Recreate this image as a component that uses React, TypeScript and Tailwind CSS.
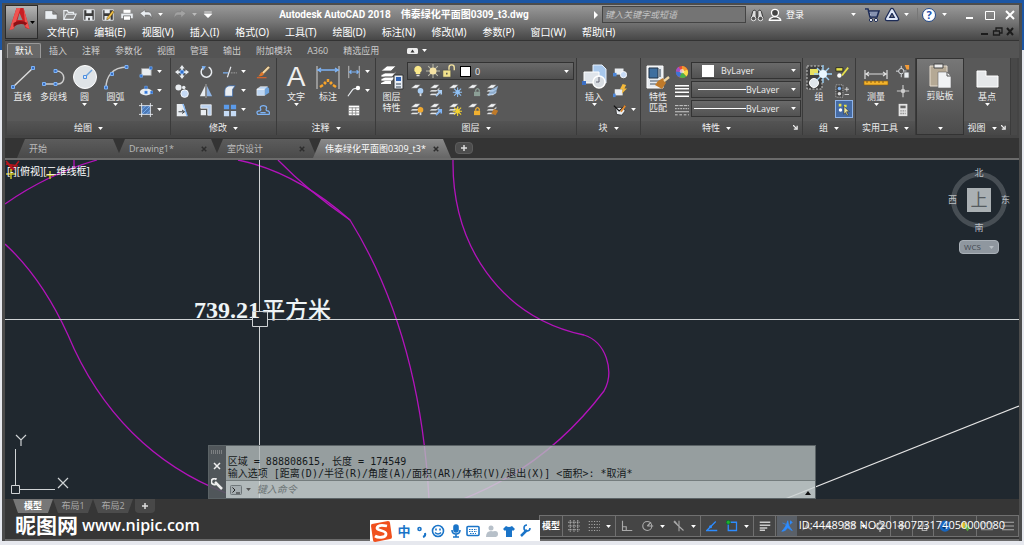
import { useState } from 'react'
import type { ReactNode } from 'react'

const menus = ['文件(F)', '编辑(E)', '视图(V)', '插入(I)', '格式(O)', '工具(T)', '绘图(D)', '标注(N)', '修改(M)', '参数(P)', '窗口(W)', '帮助(H)']
const ribbonTabs = ['默认', '插入', '注释', '参数化', '视图', '管理', '输出', '附加模块', 'A360', '精选应用']

const L = '#e9edf1'
const B = '#7db3f5'
const D = '#2c3138'

// 16px ribbon, toolbar and status icons
const small: Record<string, ReactNode> = {
  // quick access
  new: <path d="M1 3h9l5 4v6H1z M10 3v4h5" fill={L} stroke="#666" strokeWidth=".8" />,
  open: <><path d="M1 13V3h4l1 2h6v2" fill="none" stroke={L} strokeWidth="1.400" /><path d="M1 13l3-6h11l-3 6z" fill="#888" stroke={L} strokeWidth="1.200" /></>,
  save: <><path d="M2 2h12v12H2z" fill="#3a3a3a" stroke={L} /><path d="M5 2h6v4H5zM4 9h8v5H4z" fill={L} /><path d="M7 11h2v3H7z" fill="#444" /></>,
  saveAs: <><path d="M2 2h12v12H2z" fill="#3a3a3a" stroke={L} /><path d="M4 2h6v4H4zM4 9h7v5H4z" fill={L} /><path d="M7 11l6-8 2 1.500-6 8-2.500 1z" fill="#f3c348" stroke="#5a4010" strokeWidth=".6" /></>,
  print: <><path d="M4 2h8v4H4z" fill="#fff" /><path d="M1 6h14v6H1z" fill={L} stroke="#777" strokeWidth=".6" /><path d="M4 9h8v5H4z" fill="#fff" stroke="#555" strokeWidth=".8" /></>,
  undo: <path d="M1 6l6-4v2.500h3c3 0 5 2 4.500 7.500-1-3-2-4-4.500-4H7V11z" fill={L} stroke="#555" strokeWidth=".5" />,
  redo: <path d="M15 6L9 2v2.500H6C3 4.500 1 6.500 1.500 12c1-3 2-4 4.500-4h3V11z" fill="#a2a2a2" stroke="#777" strokeWidth=".5" />,
  custom: <path d="M3 4h10M3 6.500h10l-5 5z" fill="#fff" stroke="#fff" />,
  // info center
  search: <><path d="M3 4c1-2 3-2 4 0v8H1zM9 4c1-2 3-2 4 0l2 8H9z" fill="#ddd" stroke="#222" /><circle cx="4" cy="12" r="2.600" fill="#555" stroke="#eee" /><circle cx="12" cy="12" r="2.600" fill="#555" stroke="#eee" /></>,
  user: <><circle cx="8" cy="5.500" r="4" fill="#444" stroke="#fff" strokeWidth="1.500" /><path d="M1.500 14c0-3 3-3 5-4h3c2 1 5 1 5 4z" fill="#444" stroke="#fff" strokeWidth="1.500" /></>,
  cart: <><path d="M1 2h3l2 8h7l2-6H5" fill="#cdd8ec" stroke="#1c2b56" strokeWidth="1.600" /><path d="M6 6h8M7 8h6" stroke="#1c2b56" strokeWidth=".8" /><circle cx="7" cy="13" r="1.600" fill="#fff" stroke="#1c2b56" /><circle cx="12" cy="13" r="1.600" fill="#fff" stroke="#1c2b56" /></>,
  exchange: <><path d="M8 3l5 9H3z" fill="none" stroke="#1c2b56" strokeWidth="4.500" strokeLinejoin="round" /><path d="M8 3l5 9H3z" fill="none" stroke="#dfe8f8" strokeWidth="2" strokeLinejoin="round" /></>,
  // draw
  rect: <><path d="M3 4h11v8H3z" fill={L} stroke="#999" /><path d="M12 2h3v3h-3zM1 11h3v3H1z" fill="#2f6fd0" stroke={B} strokeWidth=".7" /></>,
  ellipse: <><ellipse cx="8" cy="9" rx="7" ry="4" fill={L} /><path d="M6.500 2.500h3v3h-3zM6.500 8h3v3h-3zM13 8h3v3h-3z" fill="#2f6fd0" stroke={B} strokeWidth=".6" /></>,
  hatch: <><path d="M3 3h10v10H3z" fill="#4b78b5" /><path d="M3 13L13 3M3 8l5-5M8 13l5-5" stroke={B} /><path d="M0 3h16M0 13h16M3 0v16M13 0v16" stroke={L} /></>,
  // modify
  move: <><path d="M8 0l3 4H9v3h3V5l4 3-4 3V9H9v3h2l-3 4-3-4h2V9H4v2L0 8l4-3v2h3V4H5z" fill={L} /><path d="M6 6h4v4H6z" fill="#2f6fd0" stroke={B} strokeWidth=".8" /></>,
  rotate: <><path d="M11 2.500A6 6 0 1 1 5 3" fill="none" stroke={L} strokeWidth="1.700" /><path d="M3 1l5 .5L5 6z" fill={B} /></>,
  trim: <><path d="M0 9h6" stroke={B} strokeWidth="1.400" /><path d="M9 9h7" stroke="#aaa" strokeDasharray="2 1" /><path d="M9 2L5 14" stroke={L} strokeWidth="1.300" /></>,
  brush: <><path d="M14 1l2 2-8 8-2-2z" fill="#f2d9a8" stroke="#5c3a12" strokeWidth=".5" /><path d="M7 8l2 2c-1 3-4 3-7 3 3-1 2-4 5-5z" fill="#e0782a" /><path d="M1 14.500h11" stroke="#d8632a" strokeWidth="1.400" /></>,
  copy: <><circle cx="4" cy="4" r="3.500" fill={L} /><circle cx="11" cy="11" r="4.300" fill="#c6daf5" stroke="#fff" /><circle cx="10" cy="4" r="2" fill={L} /></>,
  mirror: <><path d="M7 2v12H1z" fill={L} /><path d="M9 2v12h6z" fill="#8fb4e4" /><path d="M8 0v16" stroke="#ddd" strokeWidth=".7" /></>,
  fillet: <path d="M2 14V8c0-4 3-6 6-6h6l-3 4v8z" fill={L} stroke="#2a5fa8" strokeWidth=".8" />,
  box: <><path d="M1 6l4-3h8l-3 3zM1 6h9v7H1z" fill="#bcd5f2" stroke="#fff" strokeWidth=".6" /><path d="M10 6l3-3 2 2v5l-5 3z" fill="#6fa4dd" /></>,
  stretch: <><path d="M2 1h8l4 14H2z" fill={L} /><path d="M9 1l5 14" stroke={B} strokeWidth="1.500" /><path d="M4 10h6M8 8l3 2-3 2" stroke={D} fill="none" /></>,
  scale: <><path d="M2 2h12v12h-4V6H2z" fill="#b9d0ee" stroke="#fff" strokeWidth=".8" /><path d="M2 8h6v6H2z" fill={L} /></>,
  array: <><path d="M1 2h6v5H1zM9 2h6v5H9z" fill="#5b9bea" /><path d="M1 9h6v6H1zM9 9h6v6H9z" fill="#c6dcf6" /></>,
  offset: <path d="M2 13c-2-3 0-4 2-4 1 0 2-1 1-3-1-4 8-4 7 0-1 2 0 3 1 3 2 0 3 2 2 4zM5 11h6" fill="none" stroke={B} strokeWidth="1.500" />,
  // annotate
  dim: <><path d="M2 1v14M14 1v14" stroke="#ccc" /><path d="M2 8h12M5 6L3 8l2 2M11 6l2 2-2 2" stroke={B} strokeWidth="1.300" fill="none" /></>,
  leader: <><path d="M1 14l5-7q1-2 6-2" fill="none" stroke={L} strokeWidth="1.300" /><circle cx="12.500" cy="4.500" r="2.500" fill="#fff" /></>,
  table: <><path d="M2 3h12v11H2z" fill="#fff" /><path d="M2 5.500h12M2 8.500h12M2 11.500h12M6 5v9M10 5v9" stroke="#888" /></>,
  // block
  blockNew: <><path d="M2 4h10v7H2z" fill={L} /><path d="M0 9h4v4H0z" fill="#4b86d9" /><circle cx="12" cy="11" r="3.600" fill="#c6daf5" stroke="#fff" /></>,
  blockEdit: <><path d="M2 6h9v7H2z" fill={L} /><path d="M0 11h3v4H0z" fill="#4b86d9" /><path d="M11 0l4 1-2 4h3l-6 6 1-5H8z" fill="#f4b93a" /></>,
  attr: <><path d="M3 5h8l3 4-4 5-6-1z" fill={L} stroke="#333" /><path d="M1 3l6 6 7-6" stroke="#111" strokeWidth="1.400" fill="none" /><path d="M9 10l5-7" stroke="#e28b2f" strokeWidth="2" /></>,
  // properties
  wheel: <><circle cx="8" cy="8" r="7" fill="#e84c3d" /><path d="M8 8L8 1A7 7 0 0 1 14 5z" fill="#f19a2c" /><path d="M8 8l6-3a7 7 0 0 1-1 8z" fill="#f6e04a" /><path d="M8 8l5 5a7 7 0 0 1-8 1z" fill="#49b34b" /><path d="M8 8l-3 6a7 7 0 0 1-4-7z" fill="#3d73d8" /><path d="M8 8L1 7a7 7 0 0 1 3-5z" fill="#a44fc4" /><circle cx="8" cy="7" r="2.500" fill="#fff" opacity=".6" /></>,
  weight: <path d="M0 2h16M0 5.500h16M0 9.500h16M0 14h16" stroke="#fff" strokeWidth="1.700" />,
  ltype: <><path d="M0 3h16" stroke="#ddd" strokeDasharray="4 1" /><path d="M0 6.500h16" stroke="#ddd" strokeDasharray="2 1" /><path d="M0 10h16" stroke="#ddd" /><path d="M0 13.500h16" stroke="#ddd" strokeDasharray="3 2" /></>,
  // group
  ungroup: <><path d="M1 3h8v4H1z" fill="#e6e04a" stroke="#222" /><circle cx="5" cy="12" r="2.500" fill="#fff" /><path d="M15 3L8 12" stroke="#e6e04a" strokeWidth="2" /></>,
  groupEdit: <><path d="M1 1h8v14H1z" fill="#444" stroke="#ccc" strokeDasharray="1 1" /><circle cx="5" cy="5" r="2" fill={B} /><circle cx="5" cy="11" r="2" fill="#ddd" /><path d="M11 6h5M13.500 3.500v5M11 12h5" stroke="#ddd" /></>,
  groupSel: <><path d="M2 2h3v3H2zM8 3h3v3H8z" fill="#e6e04a" /><circle cx="4" cy="9" r="2" fill="#fff" /><path d="M8 5l6 6-3 0 2 4-2 0-1-3-2 2z" fill="#f0e89a" stroke="#222" strokeWidth=".6" /></>,
  // utilities
  quick: <><path d="M6 1v13M0 7h12" stroke={L} /><circle cx="6" cy="7" r="3" fill="#555" stroke={L} /><path d="M10 0h5v5h-3z" fill="#f29b38" /><path d="M9 8h6v7H9z" fill={L} stroke="#555" /></>,
  point: <><path d="M8 1v14M1 8h14" stroke="#ccc" strokeWidth="1.300" /><circle cx="8" cy="8" r="2.500" fill="#ccc" /></>,
  calc: <><path d="M3 1h10v14H3z" fill="#e4e4e4" /><path d="M5 3h6v3H5z" fill="#666" /><path d="M5 9h6M5 12h6" stroke="#888" strokeDasharray="1.500 1" strokeWidth="1.500" /></>,
  // layer state
  bulb: <><path d="M8 1a5 5 0 0 1 3 9v2H5v-2a5 5 0 0 1 3-9z" fill="#fbe98a" /><path d="M6 13h4v2H6z" fill="#ddd" /></>,
  sun: <><path d="M8 0v16M0 8h16M2.500 2.500l11 11M13.500 2.500l-11 11" stroke="#b9b9a8" strokeWidth="1.200" /><circle cx="8" cy="8" r="4" fill="#f6e3a4" /></>,
  unlock: <><path d="M8 8V4a3 3 0 0 1 6 0v3" fill="none" stroke="#f2e2a0" strokeWidth="1.600" /><path d="M1 7h9v8H1z" fill="#f2e28c" stroke="#444" strokeWidth=".6" /><path d="M5.500 10v2" stroke="#444" strokeWidth="1.500" /></>,
  // status
  grid: <path d="M0 3h16M0 8h16M0 13h16M3 0v16M8 0v16M13 0v16" stroke="#aaa" strokeDasharray="2 1" strokeWidth="1.500" />,
  snap: <path d="M1 2h15M1 6h15M1 10h15M1 14h15" stroke="#aaa" strokeDasharray="1.500 2" strokeWidth="1.500" />,
  ortho: <path d="M2 1v13h13M2 9h5v5" fill="none" stroke="#aaa" strokeWidth="1.500" />,
  polar: <><circle cx="7" cy="8" r="6" fill="none" stroke="#aaa" strokeWidth="1.500" /><path d="M7 8h8M7 8l5-5" stroke="#aaa" strokeWidth="1.500" /></>,
  iso: <path d="M8 1v14M1 2l13 12M2 1l4 5" stroke="#aaa" strokeWidth="1.400" />,
  otrack: <><path d="M15 14H1L13 2" fill="none" stroke="#2d8cff" strokeWidth="1.700" /><circle cx="6" cy="9" r="2" fill="#2d8cff" /></>,
  osnap: <><path d="M3 3h11v11H3z" fill="none" stroke="#2d8cff" strokeWidth="1.700" /><circle cx="3" cy="3" r="2.800" fill="#20b02a" stroke="#063" /></>,
  lwt: <path d="M1 3h14M1 7h14M1 10.500h10M1 13.500h7" stroke="#ccc" strokeWidth="2" />,
  annoBlue: <path d="M9 1c1 5 1 7 6 13-3-1-5-3-6-4-2 3-4 5-8 5 4-4 6-7 8-14zM12 1l3 2-3 3M2 4l5 2" fill="#2d8cff" stroke="#2d8cff" />,
  anno: <path d="M8 1c1 6 2 8 7 13-4-1-5-3-7-4-2 1-3 3-7 4C6 9 7 7 8 1z" fill="#999" />,
  ratio: <path d="M1 4h14v8H1zM5 4v4M8 4v5M11 4v4" fill="none" stroke="#999" strokeWidth="1.500" />,
  gear: <><circle cx="8" cy="8" r="4" fill="none" stroke="#aaa" strokeWidth="3" /><path d="M8 0v4M8 12v4M0 8h4M12 8h4" stroke="#aaa" strokeWidth="2" /></>,
  plus: <path d="M8 2v12M2 8h12" stroke="#aaa" strokeWidth="2" />,
  isolate: <path d="M2 2h6v6H2zM7 8h6v6H7z" fill="none" stroke="#aaa" strokeWidth="1.500" />,
  hw: <><circle cx="8" cy="8" r="7.500" fill="#1766c0" /><path d="M4 8l3 3 5-6" stroke="#0b3264" strokeWidth="2" fill="none" /></>,
  clean: <><circle cx="5" cy="7" r="4" fill="#d9b82c" /><path d="M8 5l6 5-4 5-4-5z" fill="#58ab3b" /></>,
  full: <path d="M1 4h14v9H1z" fill="none" stroke="#999" strokeWidth="1.500" />,
  burger: <path d="M0 3h16M0 8h16M0 13h16" stroke="#aaa" strokeWidth="1.500" />,
}

// 26px ribbon icons
const big: Record<string, ReactNode> = {
  line: <><path d="M3 23L23 4" stroke="#ddd" strokeWidth="1.400" /><path d="M1.500 21.500h3v3h-3zM21.500 2.500h3v3h-3z" fill="#3b6fc4" stroke={B} /></>,
  pline: <><path d="M3 20h14c8 0 8-13-2-13" fill="none" stroke="#ccc" strokeWidth="1.500" /><path d="M1.500 18.500h3v3h-3zM13 18.500h3v3h-3zM13 5.500h3v3h-3z" fill="#3b6fc4" stroke={B} /></>,
  circle: <><circle cx="13" cy="13" r="11.500" fill="#dfe3e6" stroke="#fff" /><path d="M13 13l7-7" stroke="#6fa3dc" strokeWidth="1.500" /><path d="M11.500 11.500h3v3h-3z" fill="#dbe8fa" stroke="#4c8fe0" /></>,
  arc: <><path d="M3 24C3 13 9 3 24 3" fill="none" stroke="#ccc" strokeWidth="1.500" /><path d="M1.500 22h3v3h-3zM7.500 8.500h3v3h-3zM22 1.500h3v3h-3z" fill="#3b6fc4" stroke={B} /></>,
  dims: <><path d="M2 2v23M24 2v23" stroke="#aaa" strokeWidth="1.500" /><path d="M2 6h22M6 4L3 6l3 2M20 4l3 2-3 2" stroke={B} fill="none" strokeWidth="1.400" /><path d="M5 23l3-2M9 18l2 2M13 15v3M17 18l-2 2M21 23l-3-2" stroke="#f7a42c" strokeWidth="2.500" /></>,
  layers: <><path d="M2 7l6-5h9l-5 5zM2 11l4-2h9l3-2-5 6H2zM2 15l4-2h9l3-2-5 6H2z" fill="#fff" stroke="#555" strokeWidth=".7" /><path d="M2 19l4-2h6v3H2z" fill="#fff" /><path d="M15 11h9v14h-9z" fill="#e9eef5" stroke="#333" /><path d="M17 13h5v4h-5z" fill="#2f62b5" /><path d="M17 20h5M17 23h5" stroke="#345" /></>,
  insert: <><path d="M12 1h9l4 4v14H12z" fill="#a8c8ec" stroke="#e7f0fb" /><path d="M3 8h15v11H3z" fill="#dfe4ea" stroke="#fff" /><path d="M1 17h4v4H1z" fill="#3b6fc4" /><circle cx="18" cy="18" r="6" fill="#d8dde2" stroke="#fff" strokeWidth="1.500" /><path d="M18 18v-5M18 18h-3" stroke="#667" /></>,
  match: <><path d="M2 2h16v22H2z" fill="#e7ebef" stroke="#fff" /><path d="M4 4h9v10H4z" fill="#3f6f9f" stroke="#234" /><path d="M15 5v8M5 17h10M5 20h6" stroke="#456" strokeWidth="1.200" /><path d="M13 17l5-3 3 5-4 6-7-4z" fill="#bf7a2a" /><path d="M19 17l5-4" stroke="#f1d7a4" strokeWidth="2.500" /></>,
  group: <><path d="M1 2h15v23H1z" fill="#3f3f3f" stroke="#ccc" strokeDasharray="2 1.500" /><path d="M4 5h8v6H4z" fill="#e9e262" /><circle cx="8" cy="19" r="4.500" fill="#dfe5ea" stroke="#fff" /><path d="M17 1v18M8 10h18M11 4l12 12M23 4L11 16" stroke="#9bd0f7" strokeWidth="1.400" /><circle cx="17" cy="10" r="4" fill="#e9f7ff" /></>,
  measure: <><path d="M2 6v9M24 6v9M2 10h22M6 8l-3 2 3 2M20 8l3 2-3 2" stroke="#ddd" fill="none" strokeWidth="1.200" /><path d="M1 17h24v4H1z" fill="#f3b32b" stroke="#8b5a0d" strokeWidth=".6" /><path d="M4 17v2M8 17v2M12 17v2M16 17v2M20 17v2" stroke="#744a0a" strokeWidth=".8" /></>,
  paste: <><path d="M3 3h17v20H3z" fill="#b5a995" stroke="#e7ddcf" /><path d="M7 1h9v4H7z" fill="#eee" stroke="#444" /><path d="M11 9h9l4 4v12H11z" fill="#f1f3f5" stroke="#666" strokeWidth=".6" /><path d="M20 9v4h4" fill="none" stroke="#555" /></>,
  base: <path d="M3 7h9v5h12v11H3z" fill="#e5e7e9" stroke="#fff" />,
}

function Small({ name, className = 'size-3.5' }: { name: string; className?: string }) {
  return <svg viewBox="0 0 16 16" className={`${className} shrink-0`} aria-hidden="true">{small[name]}</svg>
}

function Down({ className = 'text-white' }: { className?: string }) {
  return (
    <svg viewBox="0 0 8 5" className={`w-[5px] h-[3px] shrink-0 ${className}`} aria-hidden="true">
      <path d="M0 0h8L4 5z" fill="currentColor" />
    </svg>
  )
}

function Tool({ name, label, arrow }: { name: string; label: string; arrow?: boolean }) {
  return (
    <button aria-label={label} className="h-[19px] flex items-center gap-1 hover:bg-white/10">
      <Small name={name} />
      {arrow && <Down />}
    </button>
  )
}

function BigTool({ icon, label, arrow, className = 'w-[31px]' }: { icon: ReactNode; label: string[]; arrow?: boolean; className?: string }) {
  return (
    <button className={`${className} shrink-0 flex flex-col items-center hover:bg-white/10`}>
      <span className="h-[29px] flex items-center">{icon}</span>
      {label.map(l => <span key={l} className="block whitespace-nowrap leading-[11px]">{l}</span>)}
      {arrow && <span className="pt-px"><Down /></span>}
    </button>
  )
}

function Big({ name }: { name: string }) {
  return <svg viewBox="0 0 26 26" className="size-[26px]" aria-hidden="true">{big[name]}</svg>
}

function Panel({ title, width, launcher, children }: { title: string; width: string; launcher?: boolean; children: ReactNode }) {
  return (
    <section className={`${width} shrink-0 flex flex-col border-r border-[#3b3b3b]`}>
      <div className="h-[63px] pt-1 flex items-start bg-[#595959]">{children}</div>
      <div className={`h-3.5 flex items-center justify-center gap-1.5 bg-linear-to-b from-[#545454] to-[#474747] relative ${launcher ? 'pr-2.5' : ''}`}>
        <span className="whitespace-nowrap">{title}</span>
        <Down />
        {launcher && (
          <button aria-label={`${title}设置`} className="absolute right-1 top-1">
            <svg viewBox="0 0 6 6" className="size-[5px]"><path d="M0 0l4 4M5 1v4H1" stroke="#eee" fill="none" strokeWidth="1.500" /></svg>
          </button>
        )}
      </div>
    </section>
  )
}

function Col({ children, className = '' }: { children: ReactNode; className?: string }) {
  return <div className={`flex flex-col shrink-0 ${className}`}>{children}</div>
}

function PropSelect({ label, kind }: { label: string; kind: 'color' | 'weight' | 'type' }) {
  return (
    <div className="h-[17px] w-[110px] flex items-center relative border border-[#333] bg-linear-to-b from-[#6a6a6a] to-[#525252]">
      {kind === 'color' && <span className="absolute left-2.5 size-3 bg-white pointer-events-none" />}
      {kind === 'weight' && <span className="absolute left-1.5 w-12 h-px bg-white pointer-events-none" />}
      {kind === 'type' && <span className="absolute left-0.5 w-13 h-px bg-white pointer-events-none" />}
      <select aria-label={label} className={`appearance-none w-full h-full text-[9px] leading-none outline-none ${kind === 'color' ? 'pl-[29px]' : 'pl-[54px]'}`}>
        <option>ByLayer</option>
      </select>
      <span className="absolute right-1 flex pointer-events-none"><Down /></span>
    </div>
  )
}

function LayerIcon({ tint, full, label, mark }: { tint: string; full?: boolean; label: string; mark: string }) {
  return (
    <button aria-label={label} className="h-[19px] w-[19px] flex items-center justify-center">
      <svg viewBox="0 0 16 16" className="size-3.5">
        <path d="M1 6l5-4h6L8 6z" fill="#f1f3f5" stroke="#555" strokeWidth=".5" />
        {full && <path d="M1 9l2-1h6l3-3v2L8 10H1zM1 13l2-1h6l3-3v2l-4 3H1z" fill="#f1f3f5" stroke="#555" strokeWidth=".4" />}
        {mark === 'dot' && <><circle cx="12" cy="9" r="3.200" fill={tint} /><path d="M11 12h2v3h-2z" fill="#ddd" /></>}
        {mark === 'star' && <><path d="M11 5v11M5.500 10.500h11M7 6.500l8 8M15 6.500l-8 8" stroke={tint} strokeWidth="1.200" /><circle cx="11" cy="10.500" r="2.500" fill={tint} /></>}
        {mark === 'lock' && <><path d="M10 10V8q2-3 4 0v2" fill="none" stroke={tint} strokeWidth="1.500" /><path d="M8 10h7v5H8z" fill={tint} /></>}
        {mark === 'arrow' && <path d="M8 15l6-6M10 9h4v4" stroke={tint} strokeWidth="1.800" fill="none" />}
        {mark === 'sheet' && <path d="M5 8l9-5-3 9-9 3z" fill={tint} opacity=".75" />}
        {mark === 'brush' && <path d="M9 8l5 2-3 5-5-2z" fill={tint} />}
      </svg>
    </button>
  )
}

function Header() {
  return (
    <header className="h-9 flex bg-linear-to-b from-[#999] via-[#747474] to-[#474747] border-b border-[#333]">
      <button aria-label="应用程序菜单" className="w-[33px] h-[34px] shrink-0 flex items-center justify-center border border-[#2b2b2b] bg-linear-to-b from-[#b5b5b5] to-[#5a5a5a]">
        <svg viewBox="1 2 21 24" className="w-[22px] h-6 shrink-0 mb-1.5">
          <path d="M9 3h7l6 21-4-1-2-5H9l-3 6-4 1z" fill="#c81f25" />
          <path d="M9 3h4L6 24l-4 1zM16 3l6 21-4-2z" fill="#ef5350" />
          <path d="M12 8l3 7h-5z" fill="#8c8c8c" /><path d="M6 18q6-4 14 0l-2 2q-6-3-12 2z" fill="#8e1015" />
        </svg>
        <Down className="text-black" />
      </button>
      <div className="flex-1 min-w-0 flex flex-col text-white">
        <div className="h-[19px] flex items-center">
          <div className="flex items-center gap-[5px] pl-1.5">
            {['new', 'open', 'save', 'saveAs', 'print', 'undo'].map(n => (
              <button key={n} aria-label={n}><Small name={n} /></button>
            ))}
            <Down /><span /><button aria-label="redo"><Small name="redo" /></button>
            <Down className="text-[#bbb]" /><button aria-label="custom"><Small name="custom" className="size-3" /></button>
          </div>
          <h1 className="flex-1 text-center text-[10px] font-bold whitespace-pre font-[Roboto,'Noto_Sans_CJK_SC',sans-serif]">Autodesk AutoCAD 2018    伟泰绿化平面图0309_t3.dwg</h1>
          <svg viewBox="0 0 4 8" className="w-1 h-2 mr-1"><path d="M0 0l4 4-4 4z" fill="#fff" /></svg>
          <input aria-label="搜索" placeholder="键入关键字或短语" className="w-36 h-[17px] border border-[#444] bg-[#747474] px-0.5 text-[9px] italic placeholder:text-[#c4c4c4] outline-none" />
          <div className="w-[273px] shrink-0 flex items-center pl-1">
            <button aria-label="查找"><Small name="search" /></button>
            <button className="ml-1 w-24 flex items-center gap-1 text-[9px]">
              <Small name="user" />登录<span className="ml-auto pr-2 flex"><Down /></span>
            </button>
            <button aria-label="购物车"><Small name="cart" className="size-4" /></button>
            <button aria-label="应用" className="ml-1 flex items-center gap-1"><Small name="exchange" className="size-4" /><Down /></button>
            <button aria-label="帮助" className="ml-2 pl-1 flex items-center gap-1.5 border-l border-[#777]">
              <span className="size-3.5 rounded-full bg-white border border-[#224a8c] text-[#1b4fae] text-[11px] leading-3 font-bold">?</span>
              <Down />
            </button>
            <div className="ml-auto pr-1 flex items-center gap-2.5">
              <button aria-label="最小化"><svg viewBox="0 0 10 10" className="size-2.5"><path d="M1 8h7" stroke="#fff" strokeWidth="2" /></svg></button>
              <button aria-label="最大化"><svg viewBox="0 0 10 10" className="size-2.5"><path d="M.5 1.500h9v8h-9z" fill="none" stroke="#fff" /></svg></button>
              <button aria-label="关闭"><svg viewBox="0 0 10 10" className="size-2.5"><path d="M1 1l8 8M9 1L1 9" stroke="#fff" strokeWidth="2" /></svg></button>
            </div>
          </div>
        </div>
        <div className="h-4 flex items-center justify-between pl-[9px]">
          <nav className="flex gap-4 text-[10px] whitespace-nowrap font-['Noto_Sans','Noto_Sans_CJK_SC',sans-serif]">
            {menus.map(m => <button key={m}>{m}</button>)}
          </nav>
          <svg viewBox="0 0 34 10" className="w-[34px] h-2.5 mr-1" aria-hidden="true">
            <path d="M0 7h7M26 1l6 7M32 1l-6 7" stroke="#1c1c1c" strokeWidth="2" />
            <path d="M12.500 4h6v4h-6zM15 4V1h6v5h-2" fill="none" stroke="#1c1c1c" strokeWidth="1.300" />
          </svg>
        </div>
      </div>
    </header>
  )
}

function Ribbon() {
  const [tab, setTab] = useState('默认')
  return (
    <div className="text-[9px] text-[#eee] bg-[#444] pb-[3px]">
      <div className="h-[17px] flex items-end gap-px px-0.5 bg-[#545454]">
        {ribbonTabs.map(t => (
          <button
            key={t}
            onClick={() => setTab(t)}
            className={`h-[15px] px-[7px] leading-3 whitespace-nowrap ${t === tab ? 'bg-[#686868] border border-b-0 border-[#999] text-white rounded-t-xs' : 'text-[#ccc]'}`}
          >
            {t}
          </button>
        ))}
        <button aria-label="功能区显示" className="h-[15px] ml-5 flex items-center gap-1">
          <svg viewBox="0 0 11 6" className="w-[11px] h-1.5"><rect width="11" height="6" rx="1.500" fill="#eee" /><path d="M3.500 4.500h4l-2-3z" fill="#333" /></svg>
          <Down />
        </button>
      </div>
      <div className="h-[77px] flex px-0.5">
        <Panel title="绘图" width="w-[164px]">
          <BigTool icon={<Big name="line" />} label={['直线']} />
          <BigTool icon={<Big name="pline" />} label={['多段线']} />
          <BigTool icon={<Big name="circle" />} label={['圆']} arrow />
          <BigTool icon={<Big name="arc" />} label={['圆弧']} arrow />
          <Col className="pl-2">
            <Tool name="rect" label="矩形" arrow /><Tool name="ellipse" label="椭圆" arrow /><Tool name="hatch" label="图案填充" arrow />
          </Col>
        </Panel>
        <Panel title="修改" width="w-[106px]">
          <div className="pl-1 flex gap-2.5">
            <Col><Tool name="move" label="移动" /><Tool name="copy" label="复制" /><Tool name="stretch" label="拉伸" /></Col>
            <Col><Tool name="rotate" label="旋转" /><Tool name="mirror" label="镜像" /><Tool name="scale" label="缩放" /></Col>
            <Col><Tool name="trim" label="修剪" arrow /><Tool name="fillet" label="圆角" arrow /><Tool name="array" label="阵列" arrow /></Col>
            <Col><Tool name="brush" label="删除" /><Tool name="box" label="分解" /><Tool name="offset" label="偏移" /></Col>
          </div>
        </Panel>
        <Panel title="注释" width="w-[99px]">
          <BigTool className="w-[38px]" icon={<span className="font-['Liberation_Sans',sans-serif] text-[28px] leading-7">A</span>} label={['文字']} arrow />
          <BigTool className="w-[26px]" icon={<Big name="dims" />} label={['标注']} />
          <Col className="pl-1.5">
            <Tool name="dim" label="线性" arrow /><Tool name="leader" label="引线" arrow /><Tool name="table" label="表格" />
          </Col>
        </Panel>
        <Panel title="图层" width="w-[201px]">
          <BigTool icon={<Big name="layers" />} label={['图层', '特性']} />
          <Col>
            <div className="w-[167px] h-[18px] flex items-center gap-0.5 pl-1 relative border border-[#333] bg-linear-to-b from-[#6a6a6a] to-[#505050]">
              <Small name="bulb" className="size-3" /><Small name="sun" className="size-3.5" /><Small name="unlock" className="size-3.5" />
              <span className="size-[11px] ml-0.5 bg-white border border-black" />
              <select aria-label="图层" className="flex-1 h-full pl-0.5 appearance-none text-[9px] leading-none outline-none"><option>0</option></select>
              <span className="absolute right-1 flex pointer-events-none"><Down /></span>
            </div>
            <div className="flex">
              <LayerIcon label="关闭图层" tint="#a9cdf3" mark="dot" />
              <LayerIcon label="隔离" full tint="#a9cdf3" mark="arrow" />
              <LayerIcon label="冻结" tint="#8fc0f4" mark="star" />
              <LayerIcon label="锁定" tint="#8c9f96" mark="lock" />
              <LayerIcon label="置为当前" full tint="#9fc6ef" mark="sheet" />
            </div>
            <div className="flex">
              <LayerIcon label="打开图层" full tint="#f0a930" mark="dot" />
              <LayerIcon label="取消隔离" full tint="#7db3f5" mark="arrow" />
              <LayerIcon label="解冻" full tint="#f5d32f" mark="star" />
              <LayerIcon label="解锁" tint="#f0b030" mark="lock" />
              <LayerIcon label="匹配图层" full tint="#bf7a2a" mark="brush" />
            </div>
          </Col>
        </Panel>
        <Panel title="块" width="w-[64px]">
          <BigTool className="w-[34px]" icon={<Big name="insert" />} label={['插入']} arrow />
          <Col className="pl-0.5"><Tool name="blockNew" label="创建" /><Tool name="blockEdit" label="编辑" /><Tool name="attr" label="属性" arrow /></Col>
        </Panel>
        <Panel title="特性" width="w-[162px]" launcher>
          <BigTool className="w-[34px]" icon={<Big name="match" />} label={['特性', '匹配']} />
          <Col><Tool name="wheel" label="颜色" /><Tool name="weight" label="线宽" /><Tool name="ltype" label="线型" /></Col>
          <Col className="pl-0.5 gap-0.5">
            <PropSelect label="对象颜色" kind="color" /><PropSelect label="线宽选择" kind="weight" /><PropSelect label="线型选择" kind="type" />
          </Col>
        </Panel>
        <Panel title="组" width="w-[53px]">
          <BigTool className="w-[32px]" icon={<Big name="group" />} label={['组']} />
          <Col>
            <Tool name="ungroup" label="解除编组" /><Tool name="groupEdit" label="组编辑" />
            <button aria-label="组选择" className="size-[18px] flex items-center justify-center bg-[#456ba5] border border-[#8fb4ea]"><Small name="groupSel" /></button>
          </Col>
        </Panel>
        <Panel title="实用工具" width="w-[60px]">
          <BigTool className="w-[40px]" icon={<Big name="measure" />} label={['测量']} arrow />
          <Col><Tool name="quick" label="快速选择" /><Tool name="point" label="点样式" /><Tool name="calc" label="计算器" /></Col>
        </Panel>
        <section className="w-12 shrink-0 flex flex-col items-center justify-between pt-0.5 pb-1 border border-[#333] bg-linear-to-b from-[#777] to-[#4c4c4c]">
          <BigTool className="w-10" icon={<Big name="paste" />} label={['剪贴板']} />
          <Down />
        </section>
        <Panel title="视图" width="w-[47px]" launcher>
          <BigTool className="w-[46px]" icon={<Big name="base" />} label={['基点']} arrow />
        </Panel>
        <div className="flex-1 bg-[#484848]" />
      </div>
    </div>
  )
}

const files = [
  { name: '开始', width: 'w-[104px]' },
  { name: 'Drawing1*', width: 'w-[102px]', close: true },
  { name: '室内设计', width: 'w-[102px]', close: true },
  { name: '伟泰绿化平面图0309_t3*', width: 'w-[138px]', close: true },
]

function FileTabs() {
  const [active, setActive] = useState(3)
  return (
    <div className="h-[22px] flex items-end pl-3 bg-[#343434] border-b-2 border-[#6b6b6b] text-[9px]">
      {files.map((f, i) => (
        <div
          key={f.name}
          className={`${f.width} h-[19px] -mr-1 px-3 flex items-center justify-between rounded-t-md [clip-path:polygon(8px_0,calc(100%-8px)_0,100%_100%,0_100%)] ${i === active ? 'bg-linear-to-b from-[#8a8a8a] to-[#666] text-white' : 'bg-linear-to-b from-[#5c5c5c] to-[#4a4a4a] text-[#bbb]'}`}
        >
          <button onClick={() => setActive(i)} className="whitespace-nowrap">{f.name}</button>
          {f.close && (
            <button aria-label={`关闭 ${f.name}`}>
              <svg viewBox="0 0 8 8" className="size-1.5"><path d="M1 1l6 6M7 1L1 7" stroke="#2d2d2d" strokeWidth="2" /></svg>
            </button>
          )}
        </div>
      ))}
      <button aria-label="新图形" className="ml-2 mb-1 w-[18px] h-3 flex items-center justify-center rounded-sm bg-[#4d4d4d] border border-[#5c5c5c]">
        <svg viewBox="0 0 8 8" className="size-2"><path d="M4 1v6M1 4h6" stroke="#ddd" strokeWidth="1.500" /></svg>
      </button>
    </div>
  )
}

function CommandLine() {
  return (
    <div className="absolute bottom-0 left-[20%] w-[60%] h-[54px] flex border border-[#5b6366]">
      <div className="w-[17px] shrink-0 bg-[#555b5f]/90 flex flex-col items-center gap-2 pt-1">
        <svg viewBox="0 0 12 4" className="w-3 h-1"><path d="M0 1h12M0 3h12" stroke="#aaa" strokeDasharray="1 1" /></svg>
        <button aria-label="关闭命令行"><svg viewBox="0 0 8 8" className="size-2"><path d="M1 1l6 6M7 1L1 7" stroke="#eee" strokeWidth="1.500" /></svg></button>
        <button aria-label="自定义">
          <svg viewBox="0 0 12 12" className="size-3"><path d="M4 4l7 7" stroke="#eee" strokeWidth="2.500" /><path d="M5.500 1.500A3 3 0 1 0 6 5" stroke="#eee" strokeWidth="1.800" fill="none" /></svg>
        </button>
      </div>
      <div className="flex-1 min-w-0 flex flex-col font-['DejaVu_Sans_Mono','Noto_Sans_CJK_SC',monospace] text-[10px]">
        <div className="flex-1 bg-[#b4bcbc]/80 text-[#15191b] leading-3 pl-0.5 flex flex-col justify-end whitespace-nowrap">
          <p>区域 = 888808615, 长度 = 174549</p>
          <p>输入选项 [距离(D)/半径(R)/角度(A)/面积(AR)/体积(V)/退出(X)] &lt;面积&gt;: *取消*</p>
        </div>
        <div className="h-[18px] flex items-center gap-1 pl-1 pr-1 bg-[#cdd3d3]/85 border-t border-[#747c7d]">
          <svg viewBox="0 0 12 10" className="w-3 h-2.5"><rect x=".5" y=".5" width="11" height="9" rx="1" fill="#a5adb0" stroke="#6f777a" /><path d="M2.500 2.500L5 5 2.500 7.500M6 8h4" fill="none" stroke="#222" /></svg>
          <Down className="text-[#555]" />
          <input aria-label="命令" placeholder="键入命令" className="flex-1 pl-0.5 italic outline-none placeholder:text-[#6a7273]" />
          <svg viewBox="0 0 6 4" className="w-1.5 h-1 mt-1.5"><path d="M0 4h6L3 0z" fill="#111" /></svg>
        </div>
      </div>
    </div>
  )
}

function Canvas() {
  return (
    <main className="flex-1 min-h-0 relative overflow-hidden bg-[#20282f]">
      <svg viewBox="5 160 1014 339" preserveAspectRatio="xMinYMin slice" className="absolute inset-0 w-full h-full">
        <g fill="none" stroke="#b313bb" strokeWidth="1.300">
          <path d="M5 204Q48 174 97 160" />
          <path d="M74 160v8" />
          <path d="M5 244Q42 278 68 335C100 412 155 466 226 493" />
          <path d="M238 160Q296 172 350 220" />
          <path d="M278 160Q308 191 350 220Q420 333 429 499" />
          <path d="M453 160C452 245 500 317 584 335C606 342 615 371 604 391Q547 466 463 499" />
        </g>
        <path d="M6 161l9 9M19 161l-7 9-5-8M6 164l12 2" stroke="#b8141c" strokeWidth="1.500" fill="none" />
        <path d="M6 174h10M11 169v10M46 175h8M50 171v8" stroke="#c9c32a" strokeWidth="1.500" />
        <path d="M785 499L1019 406" stroke="#e4e4e4" strokeWidth="1.200" />
        <g fill="#eef4f6">
          <text x="194" y="318" fontSize="24" fontWeight="700" fontFamily="'Liberation Serif', serif">739.21</text>
          <text x="262" y="318" fontSize="23" fontWeight="500" fontFamily="'Noto Sans CJK SC', sans-serif">平方米</text>
        </g>
        <g stroke="#cfd3d5" fill="none">
          <path d="M259.500 160v151M259.500 327v172M5 319.500h247M268 319.500h751M252.500 311.500h15v15h-15z" />
          <path d="M15.500 449v37M19 489.500h36M11.500 485.500h8v8h-8z" />
          <path d="M16 435l5 5 5-5M21 440v6M58 478l10 10M68 478l-10 10" strokeWidth="1.200" />
        </g>
      </svg>
      <p className="relative pt-1 pl-0.5 text-[10px] leading-3.5 text-white">[-][俯视][二维线框]</p>
      <div className="absolute top-1.5 right-1 w-[72px] flex flex-col items-center text-[9px] text-[#b9bfc3]">
        <div className="w-[62px] h-[68px] relative flex items-center justify-center">
          <span className="absolute size-14 rounded-full border-[5px] border-[#474e54]" />
          <span className="absolute top-0">北</span>
          <span className="absolute bottom-0">南</span>
          <span className="absolute left-0">西</span>
          <span className="absolute right-0">东</span>
          <button className="relative size-6 bg-[#aab0b3] text-[#555b60] text-[17px] leading-6">上</button>
        </div>
        <button className="mt-1.5 w-10 h-3.5 flex items-center justify-between px-1 rounded-sm bg-[#8f979f] border border-[#aab1b8] text-[#3f474f] text-[8px]">
          WCS<Down className="text-[#b9c0c6]" />
        </button>
      </div>
      <CommandLine />
    </main>
  )
}

function ImeBar() {
  return (
    <div className="absolute left-[36%] -bottom-0.5 h-[21px] flex items-center bg-white text-[#1a74c8]">
      <svg viewBox="0 0 22 22" className="size-[22px]">
        <path d="M2 4L18 1q2 0 2 2l2 14q0 2-2 2L5 22q-2 0-2-2L1 6q0-2 1-2z" fill="#f0501e" />
        <path d="M17 6Q8 4 7 8c0 3 9 2 9 6s-8 4-11 2" fill="none" stroke="#fff" strokeWidth="2.800" />
      </svg>
      <span className="w-6 text-center text-[13px] leading-4 font-bold">中</span>
      <svg viewBox="0 0 124 16" className="w-[124px] h-4" fill="none" stroke="currentColor" strokeWidth="1.600">
        <circle cx="3.500" cy="6" r="1.500" /><path d="M9 10q1 3-2 4" strokeWidth="2" />
        <circle cx="22" cy="8" r="5.500" /><path d="M20 5.500v2M24 5.500v2M19 9.500q3 3 6 0" />
        <rect x="38" y="2" width="4" height="7" rx="2" fill="currentColor" /><path d="M36 7q0 4 4 4t4-4M40 11v3M37 14h6" />
        <rect x="51" y="3.500" width="12" height="9" rx="1" /><path d="M53 6.500h8M53 8.500h8M54 10.500h6" strokeDasharray="1.500 1" strokeWidth="1.200" />
        <g fill="#b7c0c9" stroke="none"><circle cx="75" cy="5" r="2.500" /><path d="M70 14q0-6 5-6t5 6z" /><circle cx="79" cy="11" r="3" /></g>
        <path d="M90 3l-3 3 2 2 1-1v7h6V7l1 1 2-2-3-3q-3 2-6 0z" fill="currentColor" stroke="none" />
        <path d="M105 13l6-6" strokeWidth="2.500" /><path d="M114 5a3 3 0 1 1-3-3" />
      </svg>
    </div>
  )
}

function StatusIcon({ name, arrow, end, on }: { name: string; arrow?: boolean; end?: boolean; on?: boolean }) {
  return (
    <button aria-label={name} className={`h-full px-1 flex items-center gap-1.5 ${end ? 'border-r border-[#707070]' : ''} ${on ? 'bg-[#5a6068]' : ''}`}>
      <Small name={name} className="size-3" />
      {arrow && <Down />}
    </button>
  )
}

function BottomBar() {
  return (
    <footer className="h-[42px] flex justify-between relative bg-[#363636] border-b-2 border-[#6a6a6a]">
      <div>
        <div className="h-3.5 flex pl-2 text-[9px] text-[#aaa]">
          <button className="w-10 bg-[#777] text-white font-bold leading-3.5 rounded-b-sm [clip-path:polygon(0_0,100%_0,calc(100%-5px)_100%,5px_100%)]">模型</button>
          <button className="w-10 bg-[#4c4c4c] leading-3.5 rounded-b-sm [clip-path:polygon(0_0,100%_0,calc(100%-5px)_100%,5px_100%)]">布局1</button>
          <button className="w-10 bg-[#4c4c4c] leading-3.5 rounded-b-sm [clip-path:polygon(0_0,100%_0,calc(100%-5px)_100%,5px_100%)]">布局2</button>
          <button aria-label="新布局" className="ml-0.5 w-5 flex items-center justify-center bg-[#484848] rounded-b-sm">
            <svg viewBox="0 0 8 8" className="size-2"><path d="M4 1v6M1 4h6" stroke="#ddd" strokeWidth="1.500" /></svg>
          </button>
        </div>
        <p className="pl-2.5 flex items-center gap-1 text-white font-bold leading-6">
          <span className="text-[21px]">昵图网</span>
          <span className="text-[16px] font-semibold">www.nipic.com</span>
        </p>
      </div>
      <ImeBar />
      <div className="mt-4 h-[22px] w-[480px] flex items-center justify-between border border-[#707070] bg-[#454545] text-[9px] text-white">
        <button className="h-full px-0.5 font-bold border-r border-[#707070]">模型</button>
        <StatusIcon name="grid" /><StatusIcon name="snap" arrow end />
        <StatusIcon name="ortho" /><StatusIcon name="polar" arrow /><StatusIcon name="iso" arrow end />
        <StatusIcon name="otrack" /><StatusIcon name="osnap" arrow end />
        <StatusIcon name="lwt" end /><StatusIcon name="annoBlue" on /><StatusIcon name="anno" /><StatusIcon name="anno" />
        <StatusIcon name="ratio" arrow />
        <StatusIcon name="gear" end /><StatusIcon name="plus" end /><StatusIcon name="isolate" end />
        <StatusIcon name="hw" /><StatusIcon name="clean" end /><StatusIcon name="full" /><StatusIcon name="burger" />
      </div>
      <p className="absolute right-3.5 bottom-1.5 text-[11px] leading-4 text-white whitespace-nowrap">ID:4448988 NO:20180723174050000080</p>
    </footer>
  )
}

export default function App() {
  return (
    <div className="h-screen flex flex-col px-0.5 pt-[3px] pb-1 bg-[linear-gradient(#1c56a4_50px,#e6e8ee_50px)] font-['Open_Sans','Noto_Sans_CJK_SC',sans-serif] overflow-hidden">
      <div className="flex-1 min-h-0 flex flex-col border-x-[3px] border-t-2 border-[#4c4c4c]">
        <Header />
        <Ribbon />
        <FileTabs />
        <Canvas />
        <BottomBar />
      </div>
    </div>
  )
}
